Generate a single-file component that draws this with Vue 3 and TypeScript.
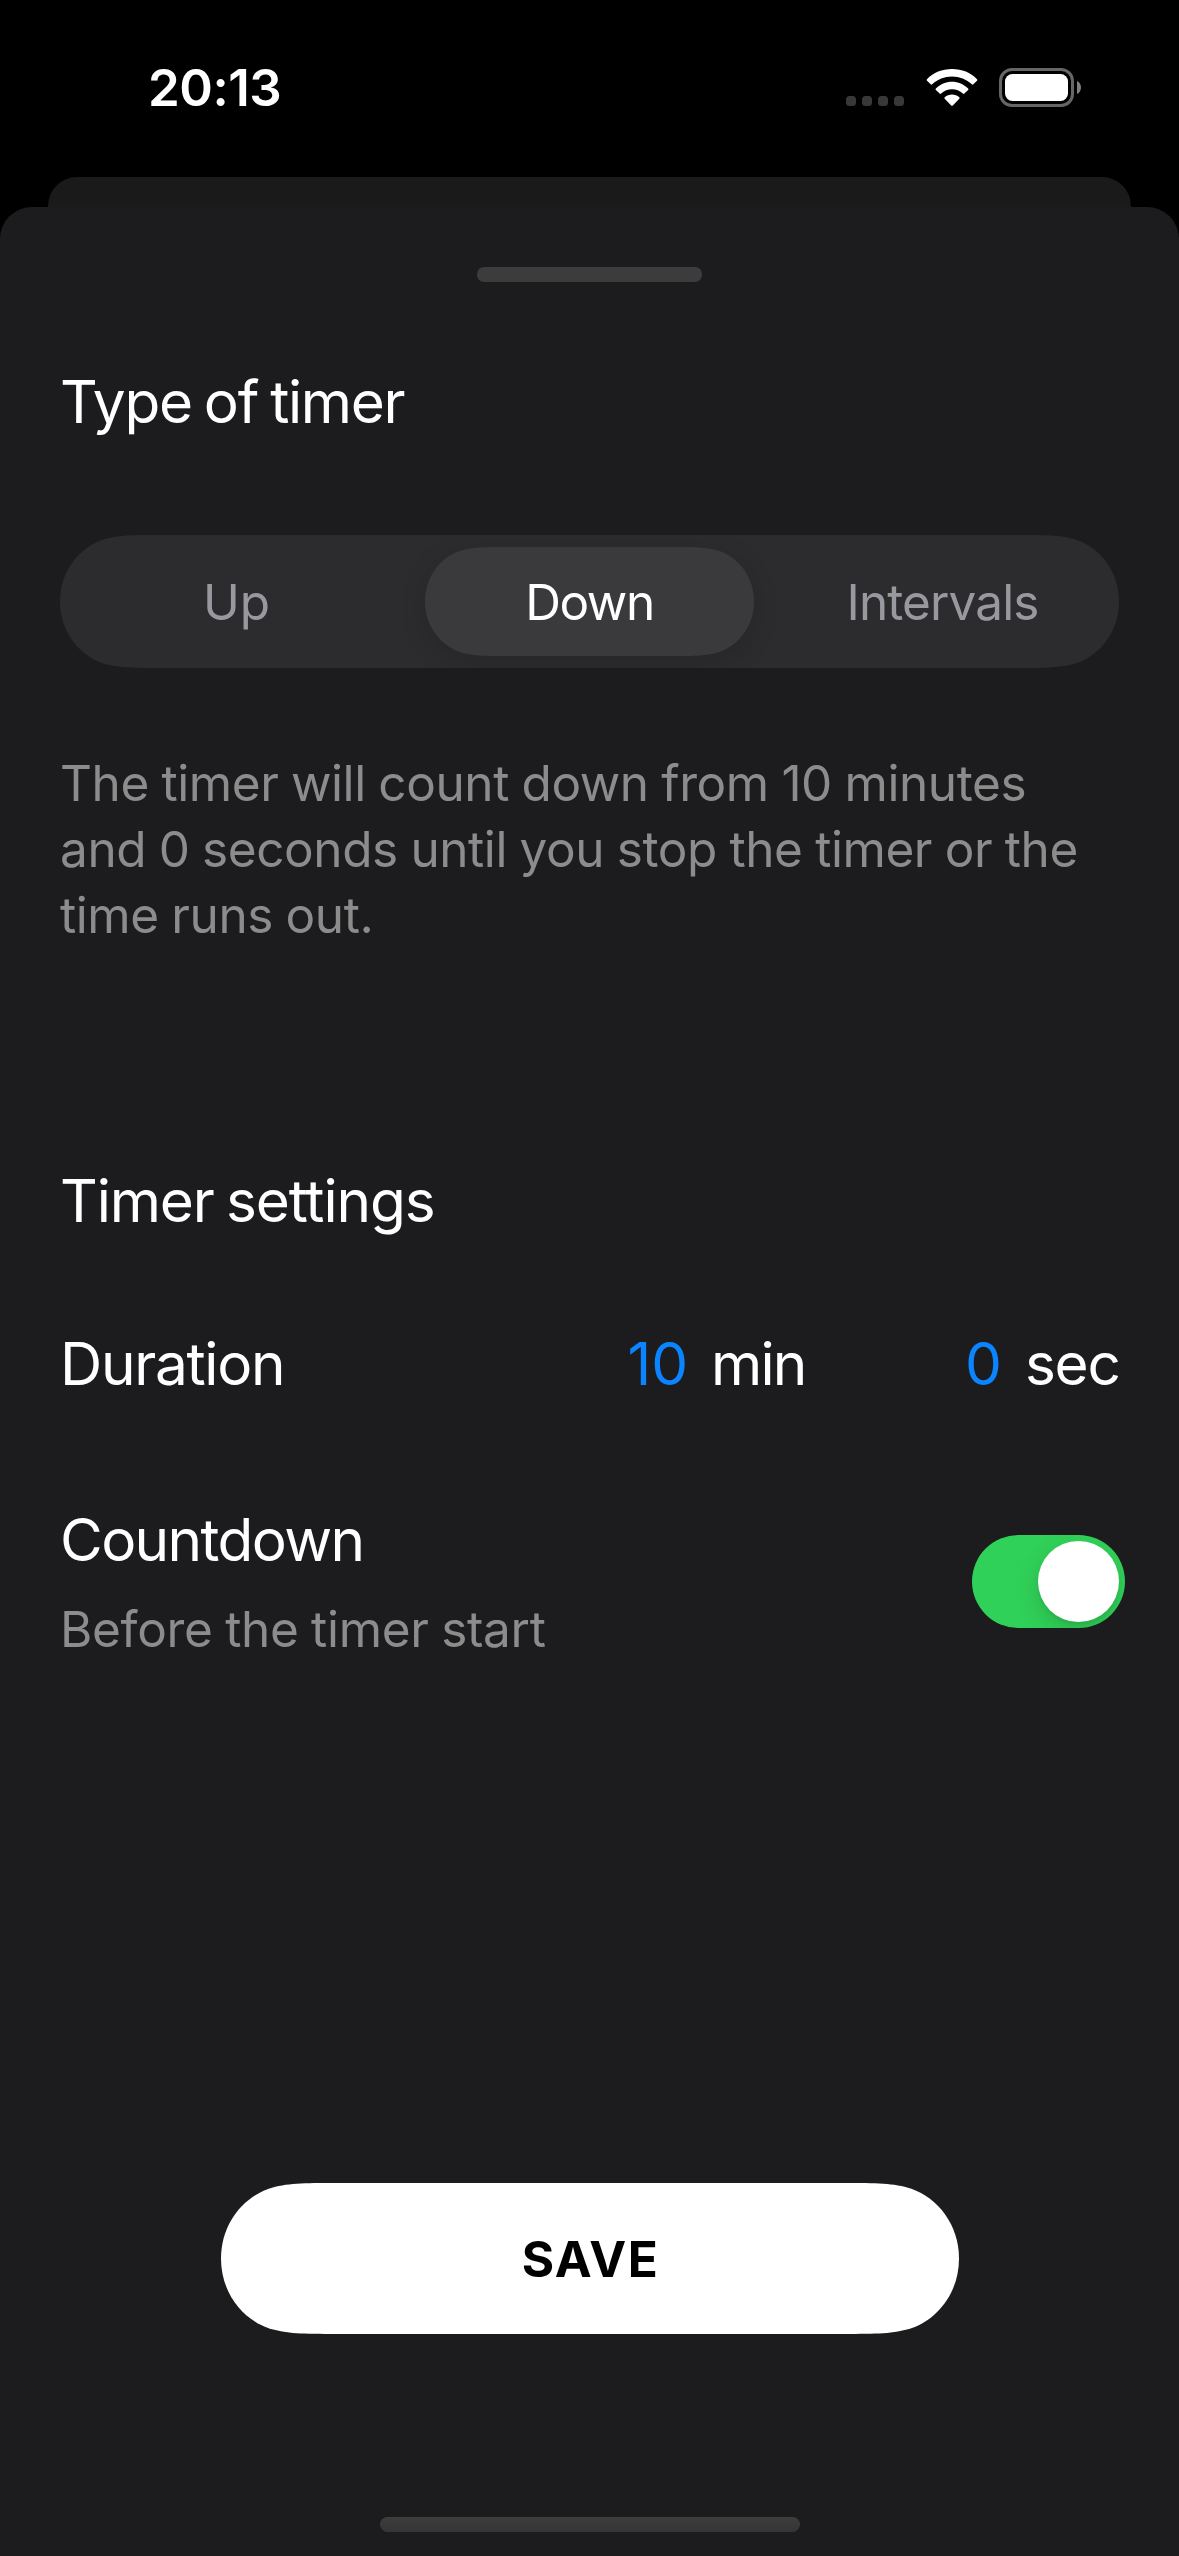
<script setup lang="ts">
import { ref, computed } from 'vue'

type Mode = 'Up' | 'Down' | 'Intervals'

const modes: Mode[] = ['Up', 'Down', 'Intervals']
const selected = ref<Mode>('Down')
const minutes = ref(10)
const seconds = ref(0)
const countdown = ref(true)

const description = computed<string[]>(() => [
  `The timer will count down from ${minutes.value} minutes`,
  `and ${seconds.value} seconds until you stop the timer or the`,
  'time runs out.',
])

// Capsule outline with continuous (smoothed) corners.
function capsule(w: number, h: number): string {
  const r = h / 2
  const p = (x: number, y: number) => `${(x * r).toFixed(2)} ${(y * r).toFixed(2)}`
  const q = (x: number, y: number) => `${(w - x * r).toFixed(2)} ${(y * r).toFixed(2)}`
  return (
    `M${p(1.5287, 0)}L${q(1.5287, 0)}` +
    `C${q(1.0885, 0)} ${q(0.8684, 0)} ${q(0.6315, 0.0749)}` +
    `C${q(0.28, 0.2)} ${q(0, 0.55)} ${q(0, 1)}` +
    `C${q(0, 1.45)} ${q(0.28, 1.8)} ${q(0.6315, 1.9251)}` +
    `C${q(0.8684, 2)} ${q(1.0885, 2)} ${q(1.5287, 2)}` +
    `L${p(1.5287, 2)}` +
    `C${p(1.0885, 2)} ${p(0.8684, 2)} ${p(0.6315, 1.9251)}` +
    `C${p(0.28, 1.8)} ${p(0, 1.45)} ${p(0, 1)}` +
    `C${p(0, 0.55)} ${p(0.28, 0.2)} ${p(0.6315, 0.0749)}` +
    `C${p(0.8684, 0)} ${p(1.0885, 0)} ${p(1.5287, 0)}Z`
  )
}

const trackClip = `path("${capsule(1059, 133)}")`
const thumbClip = `path("${capsule(329, 109)}")`
const saveClip = `path("${capsule(738, 151)}")`
</script>

<template>
  <div class="screen">
    <header class="status">
      <span class="clock">20:13</span>
      <div class="indicators">
        <div class="dots"><i v-for="n in 4" :key="n"></i></div>
        <svg class="wifi" width="52" height="38" viewBox="0 0 52 38">
          <g fill="#fff">
            <path d="M1 11.200C7.500 4.500 16 1 26 1s18.500 3.500 25 10.200c.5.500.5 1 0 1.500l-3.700 3.600c-.5.500-1 .5-1.500 0C40.500 11.200 33.500 8.400 26 8.400S11.500 11.200 6.200 16.300c-.5.500-1 .5-1.500 0L1 12.700c-.5-.5-.5-1 0-1.500z" />
            <path d="M9.900 20.500C14.200 16.100 19.800 13.700 26 13.700s11.800 2.400 16.100 6.800c.5.500.4 1 0 1.500l-3.700 3.600c-.5.500-1 .5-1.500 0C33.900 22.700 30.100 21.200 26 21.200s-7.900 1.500-10.900 4.400c-.5.500-1 .5-1.500 0L9.900 22c-.4-.5-.5-1 0-1.500z" />
            <path d="M18.700 29.300C20.700 27.400 23.200 26.500 26 26.500s5.300.9 7.300 2.800c.5.500.5 1 0 1.500l-6.500 6.600c-.5.500-1.100.5-1.600 0l-6.500-6.600c-.5-.5-.5-1 0-1.500z" />
          </g>
        </svg>
        <svg class="battery" width="83" height="39" viewBox="0 0 83 39">
          <rect x="1.500" y="1.500" width="72" height="36" rx="11.500" fill="none" stroke="#666" stroke-width="3" />
          <rect x="6" y="6" width="63" height="27" rx="7.500" fill="#fff" />
          <path d="M78 13c2.500 1.200 4 3.600 4 6.500s-1.500 5.300-4 6.500z" fill="#808080" />
        </svg>
      </div>
    </header>

    <div class="backcard"></div>

    <main class="sheet">
      <div class="grabber"></div>

      <h2 class="heading type"><span>Type of timer</span></h2>

      <div class="segmented">
        <button
          v-for="m in modes"
          :key="m"
          class="segment"
          :class="{ active: m === selected }"
          @click="selected = m"
        >
          <span class="pill"><span :class="m.toLowerCase()">{{ m }}</span></span>
        </button>
      </div>

      <p class="description">
        <span v-for="line in description" :key="line">{{ line }}</span>
      </p>

      <h2 class="heading settings"><span>Timer settings</span></h2>

      <div class="row duration">
        <span class="label dur">Duration</span>
        <span class="value ten">{{ minutes }}</span>
        <span class="unit min">min</span>
        <span class="value zero">{{ seconds }}</span>
        <span class="unit sec">sec</span>
      </div>

      <div class="row countdown">
        <div class="texts">
          <span class="label cd">Countdown</span>
          <span class="hint">Before the timer start</span>
        </div>
        <button class="switch" :class="{ on: countdown }" @click="countdown = !countdown">
          <span class="knob"></span>
        </button>
      </div>

      <button class="save"><span>SAVE</span></button>
      <div class="home"></div>
    </main>
  </div>
</template>

<style>
html,
body {
  margin: 0;
  background: #000;
}
</style>

<style scoped>
.screen {
  width: 1179px;
  height: 2556px;
  background: #000;
  color: #fff;
  font-family: Inter, "Liberation Sans", sans-serif;
  display: flex;
  flex-direction: column;
  overflow: hidden;
}
button {
  border: 0;
  padding: 0;
  margin: 0;
  background: none;
  font-family: inherit;
  color: inherit;
}
.status {
  height: 177px;
  box-sizing: border-box;
  padding: 68px 97px 0 148px;
  display: flex;
  justify-content: space-between;
  align-items: flex-start;
}
.clock {
  font-size: 51px;
  font-weight: 600;
  line-height: 40px;
  letter-spacing: -0.5px;
}
.indicators {
  display: flex;
  align-items: flex-start;
}
.dots {
  display: flex;
  gap: 6px;
  margin: 28px 22px 0 0;
}
.dots i {
  width: 10px;
  height: 10px;
  border-radius: 3.5px;
  background: #383838;
}
.wifi {
  margin-right: 21px;
}
.backcard {
  height: 30px;
  margin: 0 48px;
  background: #1a1a1a;
  border-radius: 29px 29px 0 0;
}
.sheet {
  flex: 1;
  box-sizing: border-box;
  padding: 60px 60px 24px;
  background: #1c1c1e;
  border-radius: 32px 32px 0 0;
  display: flex;
  flex-direction: column;
}
.grabber {
  width: 225px;
  height: 15px;
  border-radius: 7px;
  background: #3c3c3c;
  align-self: center;
}
.heading {
  margin: 0;
  font-size: 58.5px;
  font-weight: 400;
  line-height: 72px;
  word-spacing: -3px;
}
.type {
  margin-top: 84px;
  letter-spacing: -1.3px;
}
.segmented {
  margin-top: 97px;
  height: 133px;
  display: flex;
  justify-content: space-between;
  background: #2c2c2e;
  clip-path: v-bind(trackClip);
}
.segment {
  width: 353px;
  display: flex;
  justify-content: center;
  align-items: center;
  font-size: 49.5px;
  color: #98989f;
}
.segment.active {
  color: #fff;
  filter: drop-shadow(0 6px 12px rgba(0, 0, 0, 0.14));
}
.pill {
  width: 329px;
  height: 109px;
  line-height: 111px;
}
.down {
  letter-spacing: -1.5px;
}
.intervals {
  letter-spacing: -0.9px;
}
.active .pill {
  background: #3a3a3c;
  clip-path: v-bind(thumbClip);
}
.description {
  margin: 82px 0 0;
  font-size: 49.5px;
  line-height: 66px;
  letter-spacing: -0.42px;
  word-spacing: -0.9px;
  color: #8c8c8c;
  display: flex;
  flex-direction: column;
  align-items: flex-start;
}
.settings {
  margin-top: 217px;
  letter-spacing: -1.12px;
}
.row {
  display: flex;
  font-size: 58.5px;
  line-height: 72px;
  letter-spacing: -1.3px;
}
.duration {
  margin-top: 91px;
}
.value {
  color: #0a84ff;
  letter-spacing: 0;
}
.dur {
  flex: 1;
}
.unit {
  margin-left: 23px;
}
.min {
  width: 92px;
  letter-spacing: -1.9px;
}
.sec {
  width: 94px;
}
.zero {
  margin-left: 162px;
}
.countdown {
  margin-top: 104px;
  justify-content: space-between;
}
.texts {
  display: flex;
  flex-direction: column;
  align-items: flex-start;
}
.cd {
  letter-spacing: -1.6px;
}
.hint {
  margin-top: 20px;
  font-size: 49.5px;
  line-height: 66px;
  letter-spacing: -0.32px;
  word-spacing: -1px;
  color: #8c8c8c;
}
.switch {
  width: 153px;
  height: 93px;
  margin: 31px -6px 0 0;
  box-sizing: border-box;
  padding: 6px;
  border-radius: 46.5px;
  background: #39393d;
  display: flex;
  overflow: hidden;
}
.switch.on {
  background: #30d158;
  justify-content: flex-end;
}
.knob {
  width: 81px;
  height: 81px;
  border-radius: 50%;
  background: #fff;
  box-shadow: 0 9px 24px rgba(0, 0, 0, 0.15), 0 3px 3px rgba(0, 0, 0, 0.06);
}
.save {
  width: 738px;
  height: 151px;
  margin: auto 0 183px 161px;
  padding-left: 1px;
  background: #fff;
  color: #000;
  font-size: 49.5px;
  font-weight: 700;
  letter-spacing: 1.5px;
  clip-path: v-bind(saveClip);
}
.home {
  width: 420px;
  height: 15px;
  border-radius: 7.5px;
  align-self: center;
  background: linear-gradient(#3d3d3d, #353535);
}
</style>
